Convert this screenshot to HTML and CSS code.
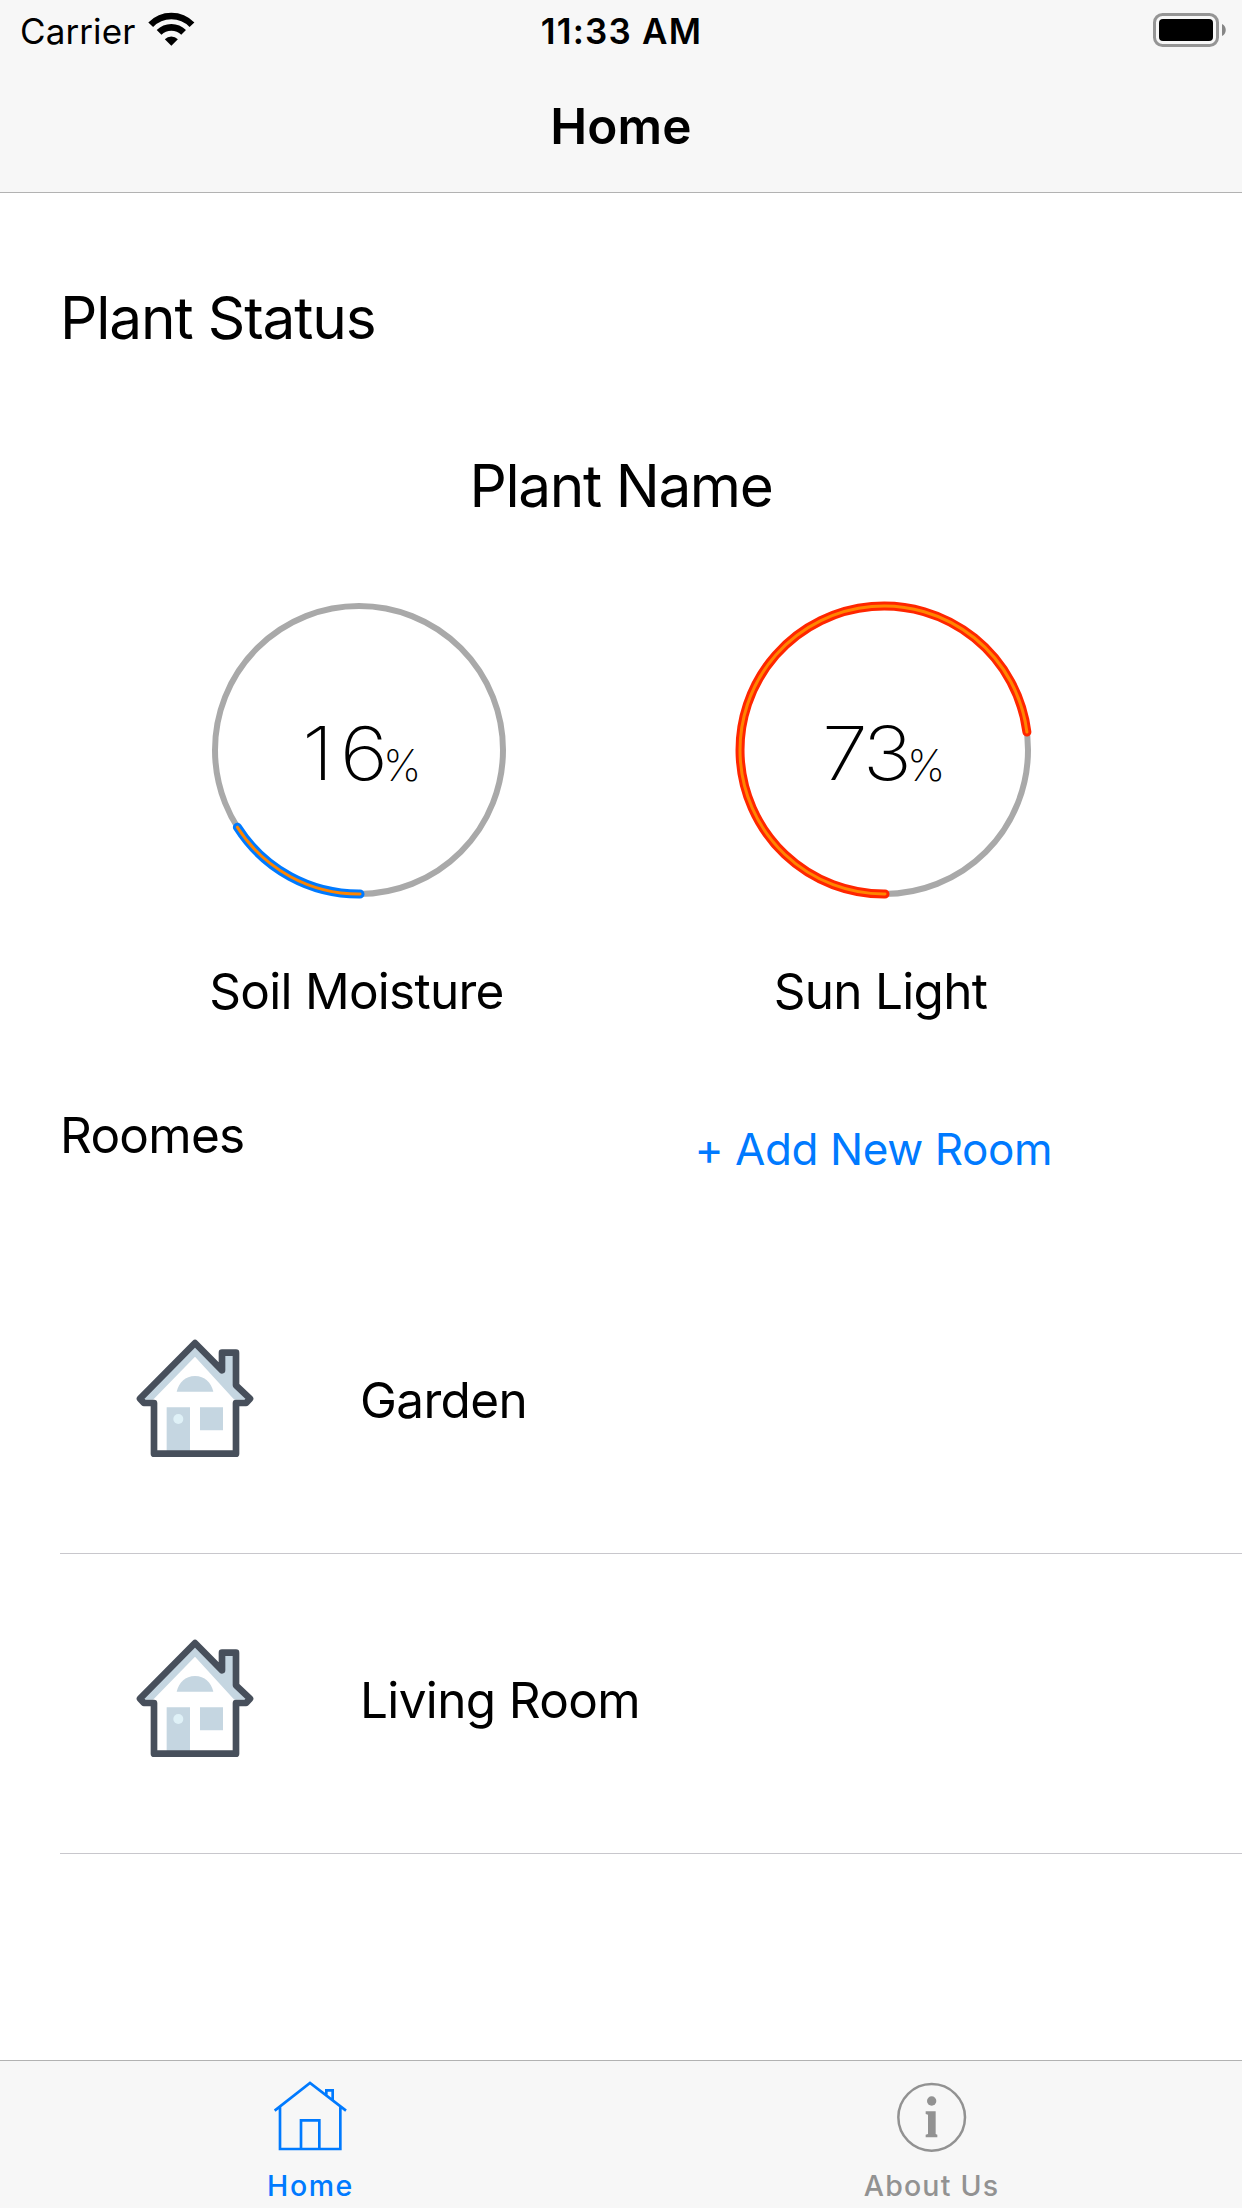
FILE: index.html
```html
<!DOCTYPE html>
<html lang="en">
<head>
<meta charset="utf-8">
<title>Home</title>
<link rel="stylesheet" href="styles.css">
</head>
<body>
<div class="app">
  <header class="header">
    <div class="status-bar">
      <div class="carrier">
        <span>Carrier</span>
        <svg class="wifi" viewBox="446 37 140 102">
          <path d="M454.1 75.3A86 86 0 0 1 577.9 75.3" fill="none" stroke="#000" stroke-width="20"/>
          <path d="M479.2 98.2A52 52 0 0 1 552.8 98.2" fill="none" stroke="#000" stroke-width="20"/>
          <path d="M516 138L496.500 118.500A27.500 27.500 0 0 1 535.500 118.500Z"/>
        </svg>
      </div>
      <div class="time">11:33 AM</div>
      <svg class="battery" viewBox="0 0 74 34">
        <rect x="1.500" y="1.500" width="63" height="31" rx="8" fill="none" stroke="#959595" stroke-width="3"/>
        <rect x="6" y="6" width="54" height="22" rx="4"/>
        <path d="M69 11C74 13 74 21 69 23Z" fill="#868686"/>
      </svg>
    </div>
    <h1 class="nav-title">Home</h1>
  </header>

  <main class="content">
    <h2 class="section-title">Plant Status</h2>
    <h3 class="plant-name">Plant Name</h3>
    <div class="gauges">
      <div class="gauge soil">
        <div class="dial">
          <svg viewBox="-150 -150 300 300">
            <circle class="track" r="144"/>
            <path class="arc-edge" d="M1 144A144 144 0 0 1 -121.600 77.200"/>
            <path class="arc-core" d="M1 144A144 144 0 0 1 -121.600 77.200"/>
          </svg>
          <div class="reading"><span class="number">16</span><span class="unit">%</span></div>
        </div>
        <div class="gauge-label">Soil Moisture</div>
      </div>
      <div class="gauge sun">
        <div class="dial">
          <svg viewBox="-150 -150 300 300">
            <circle class="track" r="144"/>
            <path class="arc-edge" d="M1 144A144 144 0 1 1 142.900 -18"/>
            <path class="arc-core" d="M1 144A144 144 0 1 1 142.900 -18"/>
          </svg>
          <div class="reading"><span class="number">73</span><span class="unit">%</span></div>
        </div>
        <div class="gauge-label">Sun Light</div>
      </div>
    </div>

    <div class="rooms-head">
      <h2 class="rooms-title">Roomes</h2>
      <a class="add-room">+ Add New Room</a>
    </div>
    <svg width="0" height="0" class="defs">
      <symbol id="house" viewBox="45 50 360 366">
        <path d="M225 68L60 235L72 248H102V400H348V248H378L390 235L348 195V97H306V150Z" fill="#fff"/>
        <path d="M225 74L66 238H99L225 109L343 238H386L344 195V97H306V154Z" fill="#c5d6e1"/>
        <path d="M170 214C176 187 196 167 225 167C254 167 274 187 280 214Z" fill="#c5d6e1"/>
        <path d="M140 261H210V392H140ZM240 261H309V330H240Z" fill="#c5d6e1"/>
        <circle cx="175" cy="296" r="15" fill="#dff1f7"/>
        <path d="M225 68L60 235L72 248H102V400H348V248H378L390 235L348 195V97H306V150Z" fill="none" stroke="#474f5b" stroke-width="20" stroke-linejoin="round"/>
      </symbol>
    </svg>
    <ul class="rooms">
      <li class="room"><svg class="house"><use href="#house"/></svg><span class="garden">Garden</span></li>
      <li class="room"><svg class="house"><use href="#house"/></svg><span class="living">Living Room</span></li>
    </ul>
  </main>

  <nav class="tab-bar">
    <a class="tab active">
      <svg class="tab-icon" viewBox="70 90 225 216" fill="none" stroke="currentColor" stroke-width="8">
        <path d="M75 182L181 99L289 182M91 172V297H272V172M154 297V211H209V297M230 137V121H249V150"/>
      </svg>
      <span>Home</span>
    </a>
    <a class="tab about">
      <svg class="tab-icon" viewBox="162 90 225 216">
        <circle cx="275" cy="202" r="100" fill="none" stroke="currentColor" stroke-width="7.500"/>
        <circle cx="275" cy="153" r="14" fill="currentColor"/>
        <path d="M257 184H287V252L292 254V262H257V254L264 252V194L257 192Z" fill="currentColor"/>
      </svg>
      <span>About Us</span>
    </a>
  </nav>
</div>
</body>
</html>
```
FILE: styles.css
```css
* {
  box-sizing: border-box;
  margin: 0;
  padding: 0;
}

body {
  background: #fff;
  color: #000;
  font-family: Inter, "Liberation Sans", sans-serif;
  font-size: 49.5px;
}

h1, h2, h3 {
  font-size: inherit;
  font-weight: 400;
}

svg {
  display: block;
}

.app {
  display: flex;
  flex-direction: column;
  height: 2208px;
  overflow: hidden;
}

.header {
  height: 193px;
  background: #f7f7f7;
  border-bottom: 1px solid #b2b2b2;
}

.status-bar {
  display: grid;
  grid-template-columns: 1fr auto 1fr;
  height: 60px;
  padding: 0 15px 0 20px;
  font-size: 35px;
  line-height: 62px;
}

.carrier {
  display: flex;
  letter-spacing: 0.1px;
}

.wifi {
  width: 46.7px;
  height: 34px;
  margin: 12.3px 0 0 13px;
}

.time {
  padding-right: 4px;
  font-weight: 600;
  letter-spacing: 1.2px;
}

.battery {
  width: 74px;
  height: 34px;
  margin-top: 13px;
  justify-self: end;
}

.nav-title {
  font-weight: 600;
  line-height: 132px;
  letter-spacing: 0.1px;
  text-align: center;
}

.content {
  flex: 1;
  padding-top: 96px;
}

.section-title {
  padding-left: 60px;
  font-size: 58.5px;
  line-height: 58px;
  letter-spacing: -1.13px;
}

.plant-name {
  margin-top: 109px;
  font-size: 58.5px;
  line-height: 59px;
  letter-spacing: -1.39px;
  text-align: center;
}

.gauges {
  display: grid;
  grid-template-columns: 300px 300px;
  column-gap: 225px;
  margin-top: 85px;
  padding-left: 209px;
}

.dial {
  position: relative;
  height: 300px;
}

.track {
  fill: none;
  stroke: #a9a9a9;
  stroke-width: 6;
}

.arc-edge, .arc-core {
  fill: none;
  stroke-linecap: round;
}

.arc-edge {
  stroke-width: 9;
}

.arc-core {
  stroke: #ff8500;
  stroke-width: 3;
}

.soil .arc-edge {
  stroke: #007aff;
}

.sun .arc-edge {
  stroke: #ff2600;
}

.reading {
  position: absolute;
  top: 0;
  left: 93px;
  display: flex;
  line-height: 307px;
}

.sun .reading {
  left: 88px;
}

/* Widened digits, anchored at their left edge */
.number {
  width: 81px;
  font-size: 74px;
  font-weight: 200;
  letter-spacing: 5.6px;
  transform: scaleX(1.12);
  transform-origin: left;
}

.sun .number {
  width: 85px;
  letter-spacing: -3.3px;
}

.unit {
  padding-top: 11.500px;
  font-size: 43px;
  font-weight: 150;
}

.gauge-label {
  margin-top: 60px;
  padding-right: 5px;
  line-height: 62px;
  letter-spacing: -0.74px;
  text-align: center;
}

.sun .gauge-label {
  padding-right: 7px;
  letter-spacing: -0.7px;
}

.rooms-head {
  display: flex;
  align-items: flex-start;
  justify-content: space-between;
  margin-top: 83px;
  padding: 0 190px 0 60px;
  line-height: 60px;
}

.rooms-title {
  letter-spacing: -0.74px;
}

.add-room {
  margin-top: 14px;
  color: #007aff;
  font-size: 44px;
  letter-spacing: -0.42px;
}

.defs {
  position: absolute;
}

.rooms {
  margin: 75px 0 0 60px;
  list-style: none;
}

.room {
  display: flex;
  height: 300px;
  padding: 83px 0 0 75px;
  border-bottom: 1px solid #c8c7cc;
  line-height: 126px;
}

.house {
  width: 120px;
  height: 122px;
  margin-right: 105px;
}

.garden {
  letter-spacing: -0.65px;
}

.living {
  letter-spacing: -0.65px;
}

.tab-bar {
  display: grid;
  grid-template-columns: 1fr 1fr;
  height: 148px;
  background: #f7f7f7;
  border-top: 1px solid #b2b2b2;
}

.tab {
  display: flex;
  flex-direction: column;
  align-items: center;
  padding-top: 19px;
  color: #929292;
  font-size: 28.5px;
  font-weight: 500;
  line-height: 67px;
  letter-spacing: 1.2px;
}

.active {
  color: #007aff;
  letter-spacing: 1.58px;
}

.tab-icon {
  width: 75px;
  height: 72px;
}
```
